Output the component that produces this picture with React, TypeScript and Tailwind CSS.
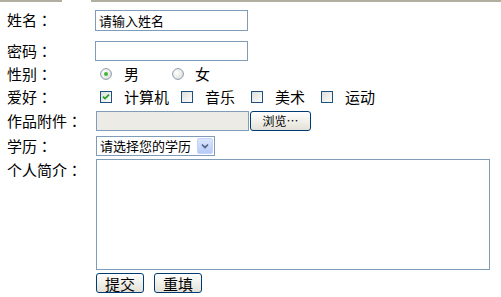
import React from "react";

const font = { fontFamily: '"Noto Sans CJK SC", "Noto Sans", sans-serif' };

const Radio = ({ checked }: { checked?: boolean }) => (
  <svg width="12" height="12" viewBox="0 0 12 12" className="shrink-0">
    <defs>
      <radialGradient id="rg" cx="0.35" cy="0.35" r="0.8">
        <stop offset="0" stopColor="#ffffff" />
        <stop offset="1" stopColor="#dcdcd5" />
      </radialGradient>
    </defs>
    <circle cx="6" cy="6" r="5.4" fill="url(#rg)" stroke="#8a9aad" strokeWidth="1" />
    {checked && <circle cx="6" cy="6" r="2" fill="#3fb53c" />}
  </svg>
);

const Check = ({ checked }: { checked?: boolean }) => (
  <svg width="12" height="12" viewBox="0 0 12 12" className="shrink-0">
    <defs>
      <linearGradient id="cg" x1="0" y1="0" x2="1" y2="1">
        <stop offset="0" stopColor="#dcdcd7" />
        <stop offset="1" stopColor="#ffffff" />
      </linearGradient>
    </defs>
    <rect x="0.5" y="0.5" width="11" height="11" fill="url(#cg)" stroke="#1c5180" />
    {checked && <path d="M3 5.6 L5 7.6 L9 3.6" fill="none" stroke="#21a121" strokeWidth="1.8" />}
  </svg>
);

// label text plus a centred full-width colon
const Label = ({ text }: { text: string }) => (
  <div className="w-[95px] shrink-0 pl-[7px] text-[15px] leading-5 text-black">
    {text}
    <span style={{ fontFamily: '"Noto Sans CJK TC", sans-serif' }}>：</span>
  </div>
);

const XpButton = ({ children, className = "" }: { children: React.ReactNode; className?: string }) => (
  <button
    className={`h-[20px] rounded-[3px] border border-[#003c74] bg-gradient-to-b from-white to-[#e3e1d6] text-black leading-none ${className}`}
  >
    {children}
  </button>
);

export default function App() {
  return (
    <div className="w-[501px] h-[297px] bg-white overflow-hidden" style={font}>
      <div className="flex h-[2px]">
        <div className="w-[62px] bg-[#b2afa0]" />
        <div className="w-[29px]" />
        <div className="flex-1 bg-[#b2afa0]" />
      </div>

      <div className="flex h-[36px] items-center">
        <Label text="姓名" />
        <div className="h-[21px] w-[153px] border border-[#7f9db9] px-[3px] text-[13px] leading-[19px] text-black">
          请输入姓名
        </div>
      </div>

      <div className="flex h-[25px] items-center">
        <Label text="密码" />
        <div className="h-[20px] w-[153px] border border-[#7f9db9]" />
      </div>

      <div className="flex h-[22px] items-center">
        <Label text="性别" />
        <div className="flex items-center pl-[5px] text-[15px] leading-5">
          <Radio checked />
          <span className="ml-[12px]">男</span>
          <span className="ml-[33px] flex"><Radio /></span>
          <span className="ml-[11px]">女</span>
        </div>
      </div>

      <div className="flex h-[23px] items-center">
        <Label text="爱好" />
        <div className="flex items-center pl-[5px] text-[15px] leading-5">
          <Check checked />
          <span className="ml-[12px]">计算机</span>
          <span className="ml-[12px] flex"><Check /></span>
          <span className="ml-[12px]">音乐</span>
          <span className="ml-[16px] flex"><Check /></span>
          <span className="ml-[12px]">美术</span>
          <span className="ml-[16px] flex"><Check /></span>
          <span className="ml-[12px]">运动</span>
        </div>
      </div>

      <div className="flex h-[25px] items-center">
        <Label text="作品附件" />
        <div className="flex items-center pl-px">
          <div className="h-[20px] w-[153px] border border-[#7f9db9] bg-[#ecebe6]" />
          <XpButton className="ml-[1px] w-[61px] text-[12px]">浏览…</XpButton>
        </div>
      </div>

      <div className="flex h-[25px] items-center">
        <Label text="学历" />
        <div className="ml-px flex h-[20px] w-[119px] items-center border border-[#7f9db9] pl-[3px] text-[13px]">
          <span className="flex-1 leading-none">请选择您的学历</span>
          <span className="mr-px flex h-[16px] w-[16px] items-center justify-center rounded-[2px] bg-gradient-to-b from-[#dbe6fd] to-[#b6cbf5] border border-[#c3d3fd]">
            <svg width="8" height="6" viewBox="0 0 8 6">
              <path d="M1 1.5 L4 4.5 L7 1.5" fill="none" stroke="#4d6185" strokeWidth="1.6" />
            </svg>
          </span>
        </div>
      </div>

      <div className="flex h-[113px] items-start">
        <div className="pt-[2px]">
          <Label text="个人简介" />
        </div>
        <div className="ml-px mt-px h-[111px] w-[394px] border border-[#7f9db9]" />
      </div>

      <div className="flex h-[24px] items-center pl-[96px]">
        <XpButton className="w-[48px] text-[15px]">提交</XpButton>
        <XpButton className="ml-[10px] w-[48px] text-[15px]">重填</XpButton>
      </div>
    </div>
  );
}
